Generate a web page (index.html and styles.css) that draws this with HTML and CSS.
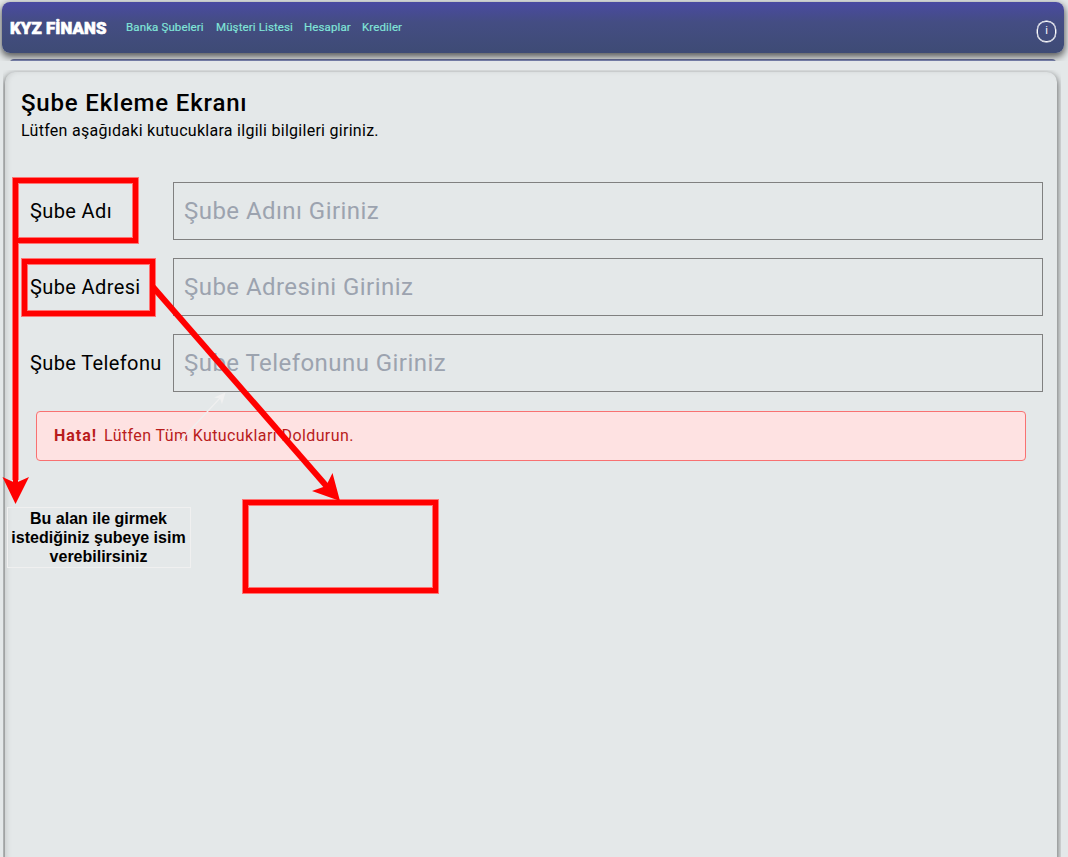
FILE: index.html
```html
<!DOCTYPE html>
<html lang="tr">
<head>
<meta charset="utf-8">
<title>KYZ Finans</title>
<link rel="stylesheet" href="styles.css">
</head>
<body>
<div class="header-wrap">
  <header class="navbar">
    <span class="brand">KYZ FİNANS</span>
    <nav class="nav-links">
      <a class="l1">Banka Şubeleri</a>
      <a class="l2">Müşteri Listesi</a>
      <a class="l3">Hesaplar</a>
      <a class="l4">Krediler</a>
    </nav>
    <span class="info">i</span>
  </header>
  <div class="stripe"></div>
</div>
<main class="panel-wrap">
  <section class="panel">
    <h1 class="title">Şube Ekleme Ekranı</h1>
    <p class="subtitle">Lütfen aşağıdaki kutucuklara ilgili bilgileri giriniz.</p>
    <form class="form">
      <label class="label" for="name">Şube Adı</label>
      <input class="input" id="name" placeholder="Şube Adını Giriniz">
      <label class="label" for="address">Şube Adresi</label>
      <input class="input" id="address" placeholder="Şube Adresini Giriniz">
      <label class="label" for="phone">Şube Telefonu</label>
      <input class="input" id="phone" placeholder="Şube Telefonunu Giriniz">
    </form>
    <div class="alert"><strong class="alert-title">Hata!</strong><span class="alert-text">Lütfen Tüm Kutucukları Doldurun.</span></div>
  </section>
</main>
<svg class="marks" width="1068" height="857" viewBox="0 0 1068 857">
  <g fill="none" stroke="#ff7474" stroke-width="7">
    <rect x="15.5" y="180.5" width="120" height="60"/>
    <rect x="24.5" y="261.5" width="128" height="52"/>
    <rect x="245.5" y="502.5" width="190" height="88"/>
    <path d="M15.5 240V480"/>
  </g>
  <g fill="none" stroke="#f00" stroke-width="5">
    <rect x="15.5" y="180.5" width="120" height="60"/>
    <rect x="24.5" y="261.5" width="128" height="52"/>
    <rect x="245.5" y="502.5" width="190" height="88"/>
    <path d="M15.5 240V484"/>
    <path d="M153 287L329 489" stroke-width="6"/>
  </g>
  <path fill="#f00" d="M15.5 504L2.5 477L15.5 483L29 477ZM340 501L312 491L326 486L332.5 473Z"/>
  <path fill="none" stroke="#f0f0f0" stroke-width="1.2" d="M180 441L221 397"/>
  <path fill="#f0f0f0" d="M225.5 392.500L214 397.500L220 398.500L222 404Z"/>
</svg>
<div class="note">Bu alan ile girmek<br>istediğiniz şubeye isim<br>verebilirsiniz</div>
</body>
</html>
```
FILE: styles.css
```css
* { box-sizing: border-box; }
body {
  margin: 0;
  height: 857px;
  overflow: hidden;
  background: #e4e8e9;
  color: #000;
  font-family: Roboto, "Noto Sans", sans-serif;
}
.header-wrap { height: 61px; padding: 2px 4px 0 2px; overflow: hidden; }
.navbar {
  display: flex;
  align-items: flex-start;
  height: 51px;
  padding: 0 8px;
  border-radius: 8px;
  background: linear-gradient(#4a4aa2, #444d83 40%, #3e4b75);
  box-shadow: 0 3px 7px 1px #0009;
}
.brand {
  width: 116px;
  padding-top: 16px;
  color: #fff;
  font-size: 16.8px;
  font-weight: 900;
  letter-spacing: .1px;
  line-height: 20px;
  white-space: nowrap;
  -webkit-text-stroke: .6px #fff;
}
.nav-links {
  display: flex;
  flex: 1;
  padding-top: 18px;
  color: #81e6d9;
  font-size: 11.5px;
  font-weight: 400;
  letter-spacing: .12px;
  line-height: 15px;
  white-space: nowrap;
  -webkit-text-stroke: .15px #81e6d9;
}
.l1 { width: 90px; }
.l2 { width: 88px; }
.l3 { width: 58px; }
.info {
  width: 19px;
  height: 21px;
  margin-top: 19px;
  border: 1.5px solid #fff;
  border-radius: 9px;
  color: #fff;
  font-size: 11px;
  line-height: 18px;
  text-align: center;
  box-shadow: 0 0 0 .4px #fff;
}
.stripe {
  position: relative;
  height: 8px;
  margin: 6px 8px 0;
  border-top: 1px solid #5a6084;
  border-radius: 7px;
  background: #737ca4;
}
.panel-wrap { height: 787px; margin: 9px 7px 0 3px; padding: 2px 4px 0 2px; overflow: hidden; }
.panel {
  height: 800px;
  padding: 15px 14px 0 16px;
  border-radius: 10px;
  background: #e4e8e9;
  box-shadow: 0 3px 6px 1px #0008, inset 3px 0 6px -2px #0002;
}
.title { margin: 0; font-size: 24px; font-weight: 500; letter-spacing: .82px; line-height: 32px; }
.subtitle { margin: 0; font-size: 16px; letter-spacing: .28px; line-height: 24px; }
.form { display: grid; grid-template-columns: 152px 870px; grid-auto-rows: 58px; row-gap: 18px; margin: 39px 0 19px; }
.label { padding-left: 9px; font-size: 20px; letter-spacing: .38px; line-height: 58px; white-space: nowrap; }
.input {
  width: 100%;
  height: 58px;
  padding: 0 10px;
  border: 1px solid #808080;
  border-radius: 0;
  background: transparent;
  font: 24px Roboto, "Noto Sans", sans-serif;
  letter-spacing: .45px;
}
.input::placeholder { color: #9ca3af; opacity: 1; }
.alert {
  display: flex;
  width: 990px;
  height: 50px;
  margin-left: 15px;
  padding-left: 17px;
  border: 1px solid #f87171;
  border-radius: 4px;
  background: #fee2e2;
  color: #b91c1c;
  font-size: 16px;
  letter-spacing: .4px;
  line-height: 48px;
}
.alert-title { width: 50px; letter-spacing: 1px; }
.marks { position: absolute; left: 0; top: 0; }
.note {
  position: absolute;
  left: 7px;
  top: 507px;
  width: 184px;
  height: 61px;
  padding: 1px 1px 0 0;
  border: 1px solid #f0f0f0;
  font: bold 16px/19px "Liberation Sans", sans-serif;
  text-align: center;
  white-space: nowrap;
}
```
